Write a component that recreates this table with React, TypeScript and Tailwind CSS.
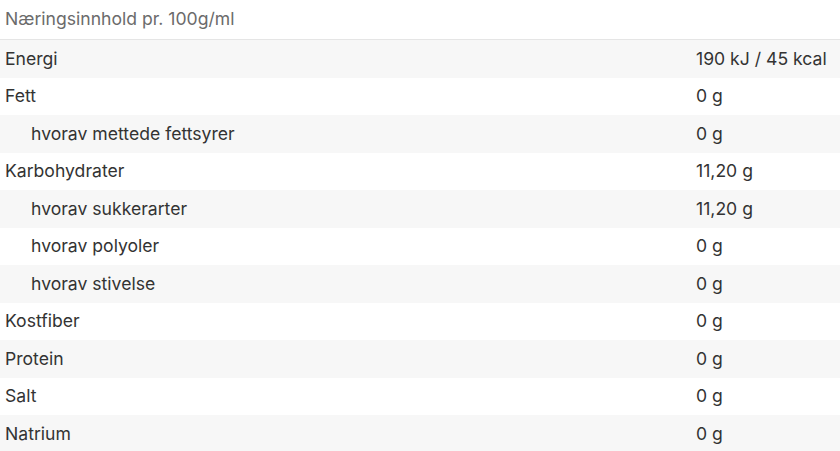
const rows: { label: string; value: string; sub?: boolean }[] = [
  { label: 'Energi', value: '190 kJ / 45 kcal' },
  { label: 'Fett', value: '0 g' },
  { label: 'hvorav mettede fettsyrer', value: '0 g', sub: true },
  { label: 'Karbohydrater', value: '11,20 g' },
  { label: 'hvorav sukkerarter', value: '11,20 g', sub: true },
  { label: 'hvorav polyoler', value: '0 g', sub: true },
  { label: 'hvorav stivelse', value: '0 g', sub: true },
  { label: 'Kostfiber', value: '0 g' },
  { label: 'Protein', value: '0 g' },
  { label: 'Salt', value: '0 g' },
  { label: 'Natrium', value: '0 g' },
]

export default function App() {
  return (
    <main className="w-[840px] bg-white font-['Inter',sans-serif] text-[17.6px] text-[#333333]">
      <div className="flex h-[40px] items-center border-b border-[#e5e5e5] px-[5px] text-[#6b6b6b]">
        Næringsinnhold pr. 100g/ml
      </div>
      {rows.map((r, i) => (
        <div
          key={r.label}
          className={`grid h-[37.5px] grid-cols-[691px_1fr] items-center ${i % 2 === 0 ? 'bg-[#f7f7f7]' : 'bg-white'}`}
        >
          <div className={r.sub ? 'pl-[31px]' : 'pl-[5px]'}>{r.label}</div>
          <div className="pl-[5px]">{r.value}</div>
        </div>
      ))}
    </main>
  )
}
